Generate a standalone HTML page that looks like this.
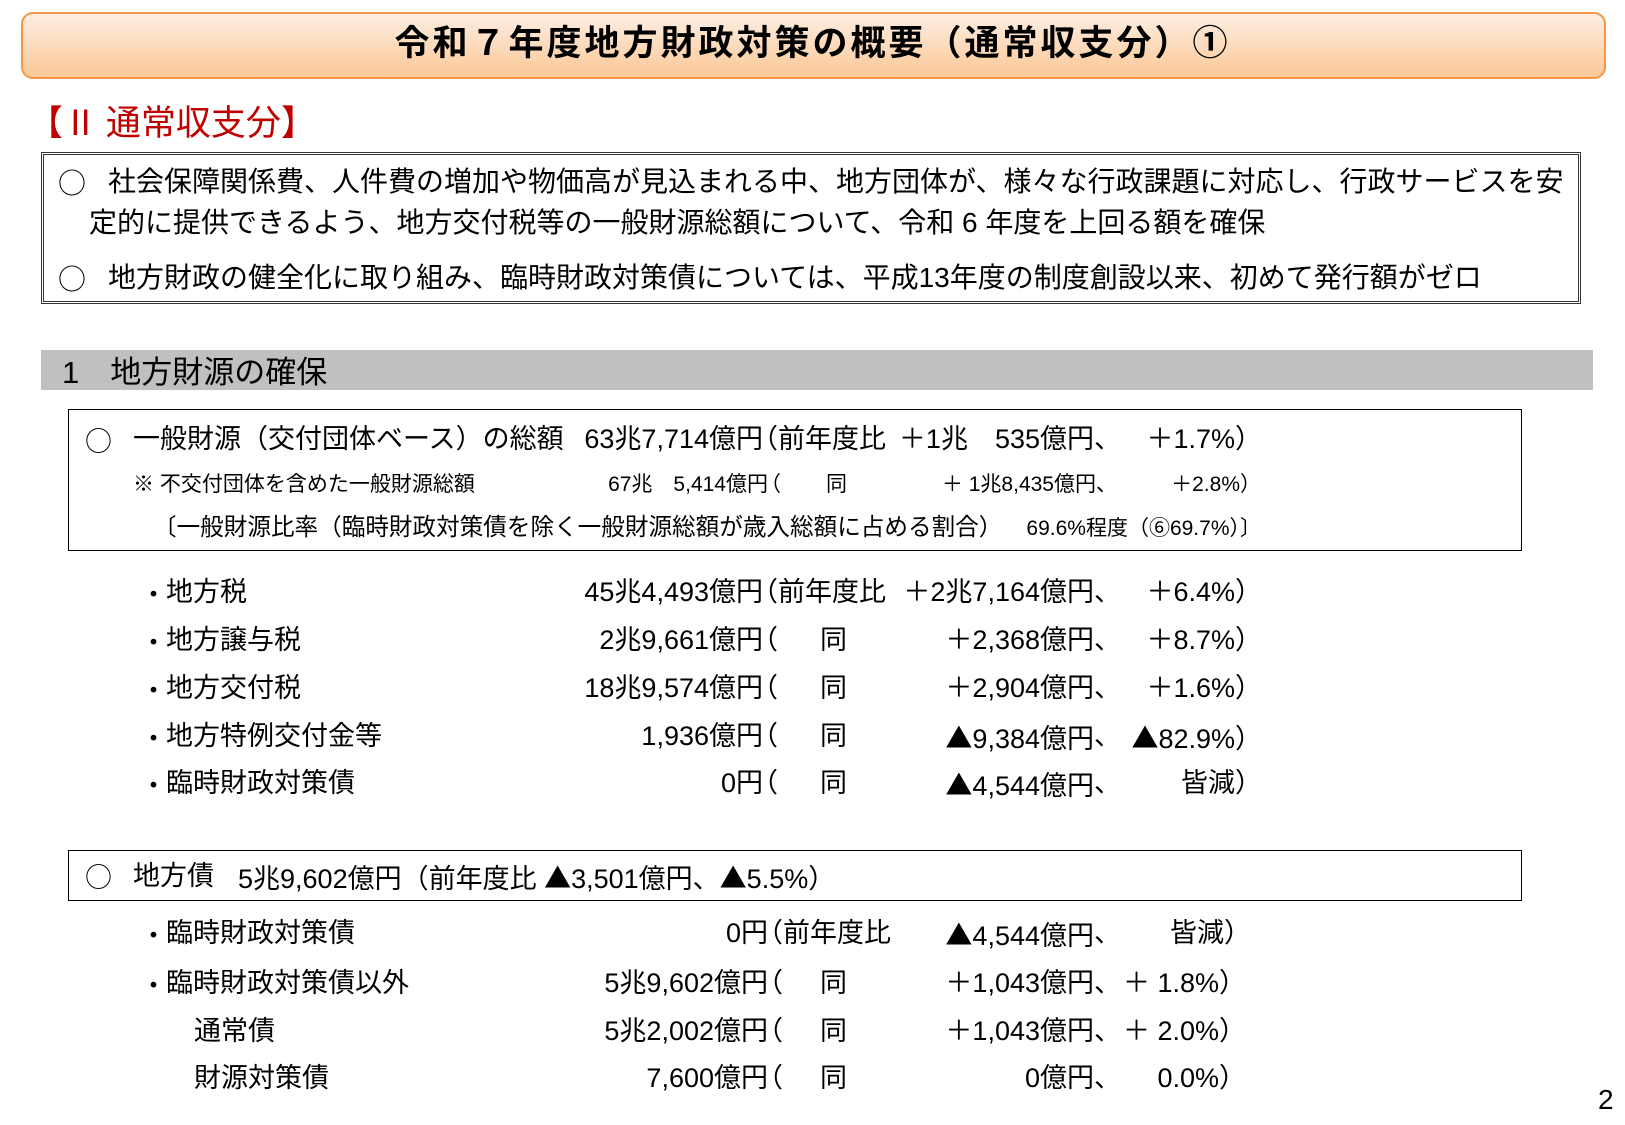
<!DOCTYPE html>
<html><head><meta charset="utf-8">
<style>
html,body{margin:0;padding:0;background:#fff;}
body{width:1625px;height:1125px;position:relative;overflow:hidden;font-family:"Liberation Sans","Noto Sans CJK JP",sans-serif;color:#000;}
.a{position:absolute;white-space:nowrap;line-height:1;}
.r{position:absolute;white-space:nowrap;line-height:1;text-align:right;}
.c{font-family:"Noto Sans CJK JP",sans-serif;}
.f27{font-size:27px;}
.f21{font-size:21px;}
</style></head><body>

<div style="position:absolute;left:21px;top:12px;width:1581px;height:63px;border:2px solid #f79646;border-radius:12px;background:linear-gradient(#fdeee2,#fbc896);"></div>
<div class="a" style="left:0;width:1625px;text-align:center;top:26px;font-size:35px;font-weight:bold;letter-spacing:3px;">令和７年度地方財政対策の概要（通常収支分）①</div>

<div class="a c" style="left:28px;top:103px;font-size:35px;color:#c00000;">【Ⅱ 通常収支分】</div>

<div style="position:absolute;left:41px;top:152px;width:1534px;height:146px;border:3px double #333;"></div>
<div class="a c" style="left:58px;top:168px;font-size:28px;">○</div>
<div class="a" style="left:108px;top:168px;font-size:28px;">社会保障関係費、人件費の増加や物価高が見込まれる中、地方団体が、様々な行政課題に対応し、行政サービスを安</div>
<div class="a" style="left:89px;top:209px;font-size:28px;">定的に提供できるよう、地方交付税等の一般財源総額について、令和 6 年度を上回る額を確保</div>
<div class="a c" style="left:58px;top:264px;font-size:28px;">○</div>
<div class="a" style="left:108px;top:264px;font-size:28px;">地方財政の健全化に取り組み、臨時財政対策債については、平成13年度の制度創設以来、初めて発行額がゼロ</div>

<div style="position:absolute;left:41px;top:350px;width:1552px;height:40px;background:#c0c0c0;"></div>
<div class="a" style="left:62px;top:357px;font-size:31px;">1　地方財源の確保</div>

<div style="position:absolute;left:68px;top:409px;width:1452px;height:140px;border:1px solid #000;"></div>
<div class="a f27 c" style="left:85px;top:426px;">○</div>
<div class="a f27" style="left:133px;top:426px;">一般財源（交付団体ベース）の総額</div>
<div class="r f27" style="right:862px;top:426px;">63兆7,714億円</div>
<div class="a f27" style="left:751px;top:426px;">（前年度比</div>
<div class="r f27" style="right:531px;top:426px;">＋1兆　535億円</div>
<div class="a f27" style="left:1094px;top:426px;">、</div>
<div class="r f27" style="right:363px;top:426px;">＋1.7%）</div>

<div class="a f21" style="left:133px;top:474px;">※ 不交付団体を含めた一般財源総額</div>
<div class="r f21" style="right:857px;top:474px;">67兆　5,414億円</div>
<div class="a f21" style="left:760px;top:474px;">（</div>
<div class="a f21" style="left:826px;top:474px;">同</div>
<div class="r f21" style="right:529px;top:474px;">＋ 1兆8,435億円</div>
<div class="a f21" style="left:1096px;top:474px;">、</div>
<div class="r f21" style="right:364px;top:474px;">＋2.8%）</div>

<div class="a" style="left:153px;top:517px;font-size:23.6px;">〔一般財源比率（臨時財政対策債を除く一般財源総額が歳入総額に占める割合）</div>
<div class="r" style="right:364px;top:518px;font-size:21px;">69.6%程度（⑥69.7%）〕</div>

<!-- items -->
<div class="a f27 c" style="left:140px;top:579px;">・</div><div class="a f27" style="left:166px;top:579px;">地方税</div>
<div class="r f27" style="right:862px;top:579px;">45兆4,493億円</div>
<div class="a f27" style="left:751px;top:579px;">（前年度比</div>
<div class="r f27" style="right:531px;top:579px;">＋2兆7,164億円</div>
<div class="a f27" style="left:1094px;top:579px;">、</div>
<div class="r f27" style="right:363px;top:579px;">＋6.4%）</div>

<div class="a f27 c" style="left:140px;top:627px;">・</div><div class="a f27" style="left:166px;top:627px;">地方譲与税</div>
<div class="r f27" style="right:862px;top:627px;">2兆9,661億円</div>
<div class="a f27" style="left:751px;top:627px;">（</div>
<div class="a f27" style="left:820px;top:627px;">同</div>
<div class="r f27" style="right:531px;top:627px;">＋2,368億円</div>
<div class="a f27" style="left:1094px;top:627px;">、</div>
<div class="r f27" style="right:363px;top:627px;">＋8.7%）</div>

<div class="a f27 c" style="left:140px;top:675px;">・</div><div class="a f27" style="left:166px;top:675px;">地方交付税</div>
<div class="r f27" style="right:862px;top:675px;">18兆9,574億円</div>
<div class="a f27" style="left:751px;top:675px;">（</div>
<div class="a f27" style="left:820px;top:675px;">同</div>
<div class="r f27" style="right:531px;top:675px;">＋2,904億円</div>
<div class="a f27" style="left:1094px;top:675px;">、</div>
<div class="r f27" style="right:363px;top:675px;">＋1.6%）</div>

<div class="a f27 c" style="left:140px;top:723px;">・</div><div class="a f27" style="left:166px;top:723px;">地方特例交付金等</div>
<div class="r f27" style="right:862px;top:723px;">1,936億円</div>
<div class="a f27" style="left:751px;top:723px;">（</div>
<div class="a f27" style="left:820px;top:723px;">同</div>
<div class="r f27" style="right:531px;top:723px;"><span class="c">▲</span>9,384億円</div>
<div class="a f27" style="left:1094px;top:723px;">、</div>
<div class="r f27" style="right:363px;top:723px;"><span class="c">▲</span>82.9%）</div>

<div class="a f27 c" style="left:140px;top:770px;">・</div><div class="a f27" style="left:166px;top:770px;">臨時財政対策債</div>
<div class="r f27" style="right:862px;top:770px;">0円</div>
<div class="a f27" style="left:751px;top:770px;">（</div>
<div class="a f27" style="left:820px;top:770px;">同</div>
<div class="r f27" style="right:531px;top:770px;"><span class="c">▲</span>4,544億円</div>
<div class="a f27" style="left:1094px;top:770px;">、</div>
<div class="r f27" style="right:363px;top:770px;">皆減）</div>

<div style="position:absolute;left:68px;top:850px;width:1452px;height:49px;border:1px solid #000;"></div>
<div class="a f27 c" style="left:85px;top:862px;">○</div>
<div class="a f27" style="left:133px;top:863px;">地方債</div>
<div class="a f27" style="left:238px;top:863px;">5兆9,602億円（前年度比 <span class="c">▲</span>3,501億円、<span class="c">▲</span>5.5%）</div>

<div class="a f27 c" style="left:140px;top:920px;">・</div><div class="a f27" style="left:166px;top:920px;">臨時財政対策債</div>
<div class="r f27" style="right:857px;top:920px;">0円</div>
<div class="a f27" style="left:756px;top:920px;">（前年度比</div>
<div class="r f27" style="right:531px;top:920px;"><span class="c">▲</span>4,544億円</div>
<div class="a f27" style="left:1094px;top:920px;">、</div>
<div class="r f27" style="right:374px;top:920px;">皆減）</div>

<div class="a f27 c" style="left:140px;top:970px;">・</div><div class="a f27" style="left:166px;top:970px;">臨時財政対策債以外</div>
<div class="r f27" style="right:857px;top:970px;">5兆9,602億円</div>
<div class="a f27" style="left:756px;top:970px;">（</div>
<div class="a f27" style="left:820px;top:970px;">同</div>
<div class="r f27" style="right:531px;top:970px;">＋1,043億円</div>
<div class="a f27" style="left:1094px;top:970px;">、</div>
<div class="r f27" style="right:379px;top:970px;">＋ 1.8%）</div>

<div class="a f27" style="left:194px;top:1018px;">通常債</div>
<div class="r f27" style="right:857px;top:1018px;">5兆2,002億円</div>
<div class="a f27" style="left:756px;top:1018px;">（</div>
<div class="a f27" style="left:820px;top:1018px;">同</div>
<div class="r f27" style="right:531px;top:1018px;">＋1,043億円</div>
<div class="a f27" style="left:1094px;top:1018px;">、</div>
<div class="r f27" style="right:379px;top:1018px;">＋ 2.0%）</div>

<div class="a f27" style="left:194px;top:1065px;">財源対策債</div>
<div class="r f27" style="right:857px;top:1065px;">7,600億円</div>
<div class="a f27" style="left:756px;top:1065px;">（</div>
<div class="a f27" style="left:820px;top:1065px;">同</div>
<div class="r f27" style="right:531px;top:1065px;">0億円</div>
<div class="a f27" style="left:1094px;top:1065px;">、</div>
<div class="r f27" style="right:379px;top:1065px;">0.0%）</div>

<div class="a" style="left:1598px;top:1086px;font-size:28px;">2</div>
</body></html>
